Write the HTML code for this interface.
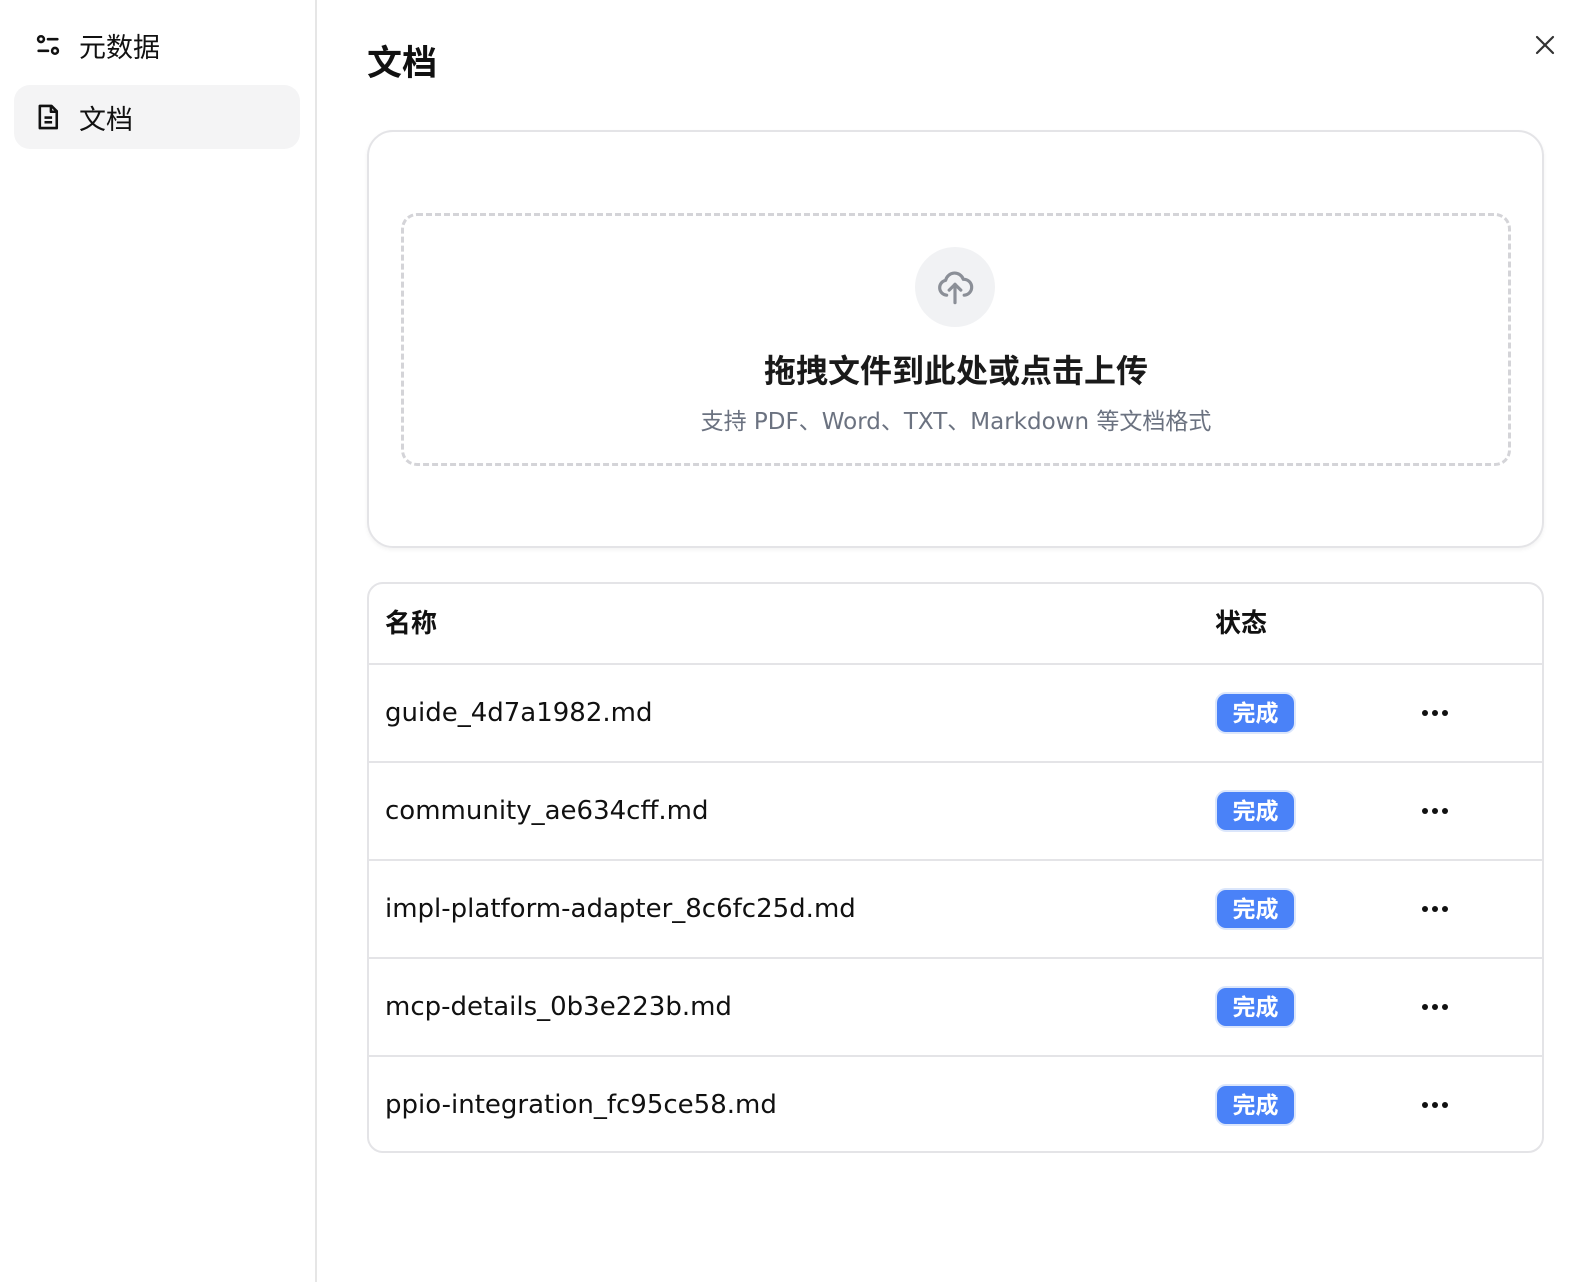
<!DOCTYPE html>
<html><head><meta charset="utf-8"><style>
*{box-sizing:border-box;margin:0;padding:0}
body{width:1590px;height:1282px;background:#fff;font-family:"Liberation Sans","Noto Sans CJK SC",sans-serif;color:#111;position:relative;overflow:hidden}
.side{position:absolute;left:0;top:0;width:317px;height:1282px;border-right:2px solid #e6e6e6}
.item{position:absolute;left:14px;width:286px;height:64px;border-radius:16px;display:flex;align-items:center;padding-left:20px;font-size:27px;gap:17px}
.abs{position:absolute}
.card{position:absolute;left:367px;top:130px;width:1177px;height:418px;border:2px solid #e4e4e7;border-radius:26px;box-shadow:0 2px 4px rgba(0,0,0,.05)}
.dash{position:absolute;left:401px;top:213px;width:1110px;height:253px;border:3px dashed #d4d4d8;border-radius:16px}
.table{position:absolute;left:367px;top:582px;width:1177px;height:571px;border:2px solid #e4e4e7;border-radius:16px;overflow:hidden}
.row{position:absolute;left:0;width:100%;height:98px;border-top:2px solid #e4e4e7}
.name{position:absolute;left:16px;top:0;line-height:96px;font-size:26px;color:#111;font-family:"DejaVu Sans","Noto Sans CJK SC",sans-serif}
.badge{position:absolute;left:846px;top:27px;width:81px;height:42px;border-radius:11px;background:#4a82f8;border:2px solid #dbe6fb;color:#fff;font-size:23px;font-weight:bold;text-align:center;line-height:38px}
.dots{position:absolute;left:1053px;top:45px;display:flex;gap:4px}
.dots i{width:6px;height:6px;border-radius:50%;background:#111;display:block}
</style></head><body>
<div class="side">
<div class="item" style="top:13px">
<svg width="28" height="28" viewBox="0 0 24 24" fill="none" stroke="#111" stroke-width="2.2" stroke-linecap="round"><circle cx="6" cy="7" r="2.5"/><line x1="12" y1="7" x2="20" y2="7"/><circle cx="18" cy="17" r="2.5"/><line x1="4" y1="17" x2="12" y2="17"/></svg>
<span>元数据</span></div>
<div class="item" style="top:85px;background:#f4f4f5">
<svg width="28" height="30" viewBox="0 0 24 24" fill="none" stroke="#111" stroke-width="2.2" stroke-linejoin="round"><path d="M5 2.5h10l4.5 4.5v14.5H5z"/><path d="M14.5 2.5v5h5"/><line x1="9" y1="12.5" x2="15.5" y2="12.5"/><line x1="9" y1="16.5" x2="15.5" y2="16.5"/></svg>
<span>文档</span></div>
</div>
<div class="abs" style="left:367px;top:44px;font-size:35px;font-weight:bold;line-height:40px">文档</div>
<svg class="abs" style="left:1534px;top:34px" width="22" height="22" viewBox="0 0 22 22" stroke="#333" stroke-width="2.2" stroke-linecap="round"><line x1="3" y1="3" x2="19" y2="19"/><line x1="19" y1="3" x2="3" y2="19"/></svg>
<div class="card"></div>
<div class="dash"></div>
<div class="abs" style="left:915px;top:247px;width:80px;height:80px;border-radius:50%;background:#f1f2f4"></div>
<svg class="abs" style="left:935px;top:266px" width="40" height="40" viewBox="0 0 24 24" fill="none" stroke="#8b8f97" stroke-width="1.9" stroke-linecap="round" stroke-linejoin="round"><path d="M7 17.5a4.5 4.5 0 0 1-.6-8.9A5.5 5.5 0 0 1 17 8a4.5 4.5 0 0 1 .5 9.5"/><path d="M12 22V11"/><path d="M8.5 14.5L12 11l3.5 3.5"/></svg>
<div class="abs" style="left:401px;width:1110px;top:346px;text-align:center;font-size:32px;font-weight:bold;color:#1a1a1a">拖拽文件到此处或点击上传</div>
<div class="abs" style="left:401px;width:1110px;top:402px;text-align:center;font-size:23px;color:#6b7280;font-family:'DejaVu Sans','Noto Sans CJK SC',sans-serif">支持 PDF、Word、TXT、Markdown 等文档格式</div>
<div class="table">
<div class="abs" style="left:16px;top:0;line-height:78px;font-size:26px;font-weight:bold">名称</div>
<div class="abs" style="left:846px;top:0;line-height:78px;font-size:26px;font-weight:bold">状态</div>
<div class="row" style="top:79px"><div class="name">guide_4d7a1982.md</div><div class="badge">完成</div><div class="dots"><i></i><i></i><i></i></div></div>
<div class="row" style="top:177px"><div class="name">community_ae634cff.md</div><div class="badge">完成</div><div class="dots"><i></i><i></i><i></i></div></div>
<div class="row" style="top:275px"><div class="name">impl-platform-adapter_8c6fc25d.md</div><div class="badge">完成</div><div class="dots"><i></i><i></i><i></i></div></div>
<div class="row" style="top:373px"><div class="name">mcp-details_0b3e223b.md</div><div class="badge">完成</div><div class="dots"><i></i><i></i><i></i></div></div>
<div class="row" style="top:471px"><div class="name">ppio-integration_fc95ce58.md</div><div class="badge">完成</div><div class="dots"><i></i><i></i><i></i></div></div>
</div>
</body></html>
